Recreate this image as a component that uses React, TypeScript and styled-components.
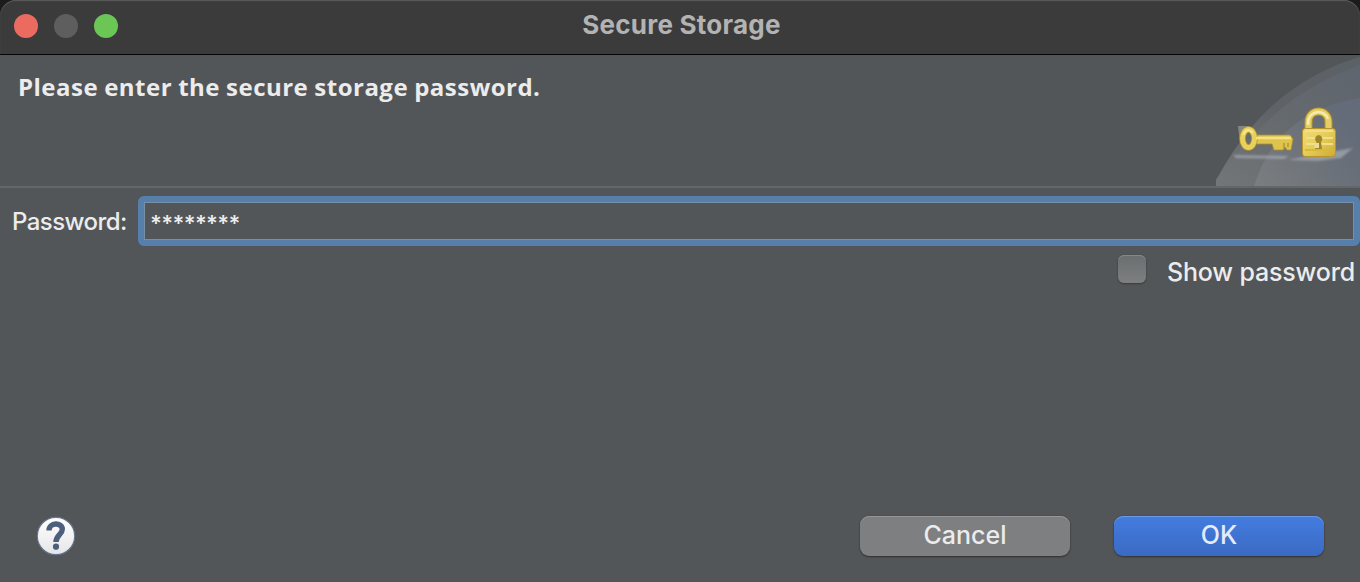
import React from 'react';
import styled, { createGlobalStyle } from 'styled-components';

const Global = createGlobalStyle`
  * { box-sizing: border-box; }
  html, body { margin: 0; padding: 0; background: #525658; overflow: hidden; }
`;

const Window = styled.main`
  width: 1360px;
  height: 582px;
  display: flex;
  flex-direction: column;
  background: #525658;
  font-family: Inter, 'Liberation Sans', sans-serif;
  color: #ececec;
  overflow: hidden;
`;

const TitleBar = styled.header`
  height: 55px;
  flex: none;
  display: grid;
  grid-template-columns: 1fr auto 1fr;
  padding: 0 11px 0 14px;
  background: #3b3b3b;
  border-bottom: 1px solid #060606;
  border-top-left-radius: 16px;
  border-top-right-radius: 16px;
  box-shadow: inset 0 1px 1px #5c5c5c;
`;

const Corners = styled.div`
  flex: none;
  background: linear-gradient(#1c1c1c 50%, #525658 50%);
`;

const Lights = styled.div`
  display: flex;
  gap: 16px;
  padding-top: 14px;
`;

const Light = styled.span<{ $color: string }>`
  width: 24px;
  height: 24px;
  border-radius: 50%;
  background: ${(p) => p.$color};
`;

const Title = styled.h1`
  margin: 0;
  font-size: 26px;
  line-height: 50px;
  font-weight: 700;
  letter-spacing: 0.25px;
  color: #b3b3b3;
  white-space: nowrap;
`;

const Banner = styled.section`
  height: 133px;
  flex: none;
  display: flex;
  justify-content: space-between;
  border-bottom: 2px solid #646769;
`;

const Message = styled.h2`
  margin: 0;
  padding: 14px 0 0 18px;
  font-family: 'Open Sans', 'Noto Sans', sans-serif;
  font-size: 24px;
  line-height: 36px;
  font-weight: 700;
  letter-spacing: 0.48px;
  word-spacing: -0.6px;
  white-space: nowrap;
`;

const Art = styled.svg`
  display: block;
  flex: none;
`;

const Field = styled.label`
  height: 50px;
  flex: none;
  display: flex;
  margin-top: 8px;
  padding-left: 12px;
`;

const FieldLabel = styled.span`
  width: 126px;
  font-size: 24px;
  font-weight: 450;
  line-height: 51px;
  letter-spacing: -0.55px;
  white-space: nowrap;
`;

const Input = styled.span`
  flex: 1;
  border: 6px solid #567fab;
  border-radius: 6px;
  display: flex;
`;

const InputText = styled.span`
  flex: 1;
  border: 1px solid #7890a4;
  padding-left: 5px;
  font-size: 22px;
  line-height: 40px;
  font-weight: 600;
  letter-spacing: -0.65px;
`;

const ShowRow = styled.label`
  flex: none;
  display: flex;
  justify-content: flex-end;
  height: 50px;
  padding: 9px 5px 0 0;
  gap: 21px;
`;

const Check = styled.span`
  width: 28px;
  height: 28px;
  border-radius: 6px;
  background: linear-gradient(#6b6e70, #7d7f80);
  box-shadow: 0 0 1px rgba(0, 0, 0, 0.25), 0 1px 2px rgba(0, 0, 0, 0.3), inset 0 1px 0 #85888a;
`;

const CheckLabel = styled.span`
  font-size: 25px;
  font-weight: 450;
  line-height: 34px;
  letter-spacing: -0.16px;
  white-space: nowrap;
`;

const Footer = styled.footer`
  margin-top: auto;
  height: 67px;
  display: flex;
  align-items: flex-start;
  padding: 0 36px 0 35px;
  gap: 44px;
`;

const Help = styled.span`
  margin-right: auto;
  display: flex;
`;

const Button = styled.button<{ $primary?: boolean }>`
  width: 210px;
  height: 40px;
  margin-top: 1px;
  padding: 0 0 2px;
  border: 0;
  border-radius: 9px;
  font: 450 25px/38px Inter, sans-serif;
  color: ${(p) => (p.$primary ? '#e4ecfb' : '#ececec')};
  background: ${(p) => (p.$primary ? 'linear-gradient(#437ce0, #3b6ac3)' : '#7d7f80')};
  box-shadow: 0 0 1px rgba(0, 0, 0, 0.4), 0 1px 2px rgba(0, 0, 0, 0.4),
    inset 0 1px 0 ${(p) => (p.$primary ? '#6b98e6' : '#959798')};
`;

function KeyAndLock() {
  return (
    <Art width="144" height="131" viewBox="0 0 144 131">
      <defs>
        <linearGradient id="outer" x1="0" y1="1" x2="1" y2="0">
          <stop offset="0" stopColor="#737678" />
          <stop offset="0.5" stopColor="#5f6367" />
          <stop offset="1" stopColor="#5c6168" />
        </linearGradient>
        <linearGradient id="middle" x1="0" y1="1" x2="1" y2="0">
          <stop offset="0" stopColor="#737678" />
          <stop offset="0.5" stopColor="#656a6e" />
          <stop offset="1" stopColor="#5f656e" />
        </linearGradient>
        <linearGradient id="inner" x1="0" y1="1" x2="1" y2="0.4">
          <stop offset="0" stopColor="#7b7e80" />
          <stop offset="0.6" stopColor="#6c7279" />
          <stop offset="1" stopColor="#646b79" />
        </linearGradient>
        <linearGradient id="gold" x1="0" y1="0" x2="1" y2="1">
          <stop offset="0" stopColor="#f1dd7a" />
          <stop offset="0.5" stopColor="#e4cc57" />
          <stop offset="1" stopColor="#cda935" />
        </linearGradient>
        <filter id="soft" x="-20%" y="-60%" width="140%" height="220%">
          <feGaussianBlur stdDeviation="1.2" />
        </filter>
        <filter id="smooth">
          <feGaussianBlur stdDeviation="0.6" />
        </filter>
      </defs>
      <path d="M0 131V125C22 86 58 28 144 2V131Z" fill="url(#outer)" />
      <path d="M0 131V125C22 95 62 50 97 32Q122 18 144 10V131Z" fill="url(#middle)" />
      <path d="M38 131C52 88 80 54 144 43V131Z" fill="url(#inner)" />
      <g fill="#a3a7b2" opacity="0.75" filter="url(#soft)">
        <path d="M17 100L73 101L68 104L20 103Z" />
        <path d="M72 105L91 101L137 93L125 103L102 106Z" />
      </g>
      <g filter="url(#smooth)">
        <path d="M22 71L34 71L25 80L24 88Z" fill="#a6a89e" opacity="0.6" />
        <path
          d="M38 80H74L77 84L75 95H71L69 92L67 95H58L56 89H38Z"
          fill="#dec34d"
          stroke="#b08e23"
          strokeWidth="0.8"
        />
        <path d="M68 88V93M72 88V92" stroke="#a98a2c" strokeWidth="1.2" />
        <ellipse cx="32.5" cy="83.5" rx="6" ry="9" fill="none" stroke="#b3922a" strokeWidth="6.5" />
        <ellipse cx="32.5" cy="83.5" rx="6" ry="9" fill="none" stroke="#e8d05c" strokeWidth="5" />
        <path d="M27 80Q31 71 37 78" fill="none" stroke="#f5e792" strokeWidth="2" />
        <path d="M40 83H75" stroke="#f3e184" strokeWidth="2.5" />
        <path d="M92.5 76V67C92.5 53 112.5 53 112.5 67V76" fill="none" stroke="#b3922a" strokeWidth="8" />
        <path d="M92.5 76V67C92.5 53 112.5 53 112.5 67V76" fill="none" stroke="#e4cd62" strokeWidth="6" />
        <path d="M92 70C91 54 109 54 112 64" fill="none" stroke="#f7ecb0" strokeWidth="2.5" />
        <rect x="86.5" y="73.5" width="33" height="28" rx="3" fill="url(#gold)" stroke="#b8932c" />
        <path d="M89 76H117M90 83H117M90 89H117" stroke="#f0df87" strokeWidth="2" />
        <path d="M89 95H117" stroke="#d9b63e" strokeWidth="2" />
        <path d="M102.5 80A4 4 0 0 1 105 87L106 94H99L100.5 87A4 4 0 0 1 102.5 80Z" fill="#a08429" />
        <path d="M100 88H103V93H98Z" fill="#e8dca0" />
      </g>
    </Art>
  );
}

export default function App() {
  return (
    <>
      <Global />
      <Window>
        <Corners>
          <TitleBar>
            <Lights>
              <Light $color="#eb6b60" />
              <Light $color="#5e5e5e" />
              <Light $color="#6bc656" />
            </Lights>
            <Title>Secure Storage</Title>
          </TitleBar>
        </Corners>
        <Banner>
          <Message>Please enter the secure storage password.</Message>
          <KeyAndLock />
        </Banner>
        <Field>
          <FieldLabel>Password:</FieldLabel>
          <Input>
            <InputText>********</InputText>
          </Input>
        </Field>
        <ShowRow>
          <Check />
          <CheckLabel>Show password</CheckLabel>
        </ShowRow>
        <Footer>
          <Help>
            <svg width="42" height="42" viewBox="0 0 42 42">
              <defs>
                <linearGradient id="help" x1="0" y1="0" x2="0" y2="1">
                  <stop offset="0" stopColor="#ffffff" />
                  <stop offset="1" stopColor="#e6e6e8" />
                </linearGradient>
              </defs>
              <circle cx="21" cy="21" r="18.7" fill="url(#help)" stroke="#66758d" strokeWidth="1.2" />
              <path
                d="M14 15.5C14 7 27.3 7.2 27.3 14.3C27.3 19.5 21 20 21 27"
                fill="none"
                stroke="#4d5f7d"
                strokeWidth="5.4"
              />
              <circle cx="21" cy="31.7" r="3.1" fill="#4d5f7d" />
            </svg>
          </Help>
          <Button>Cancel</Button>
          <Button $primary>OK</Button>
        </Footer>
      </Window>
    </>
  );
}
